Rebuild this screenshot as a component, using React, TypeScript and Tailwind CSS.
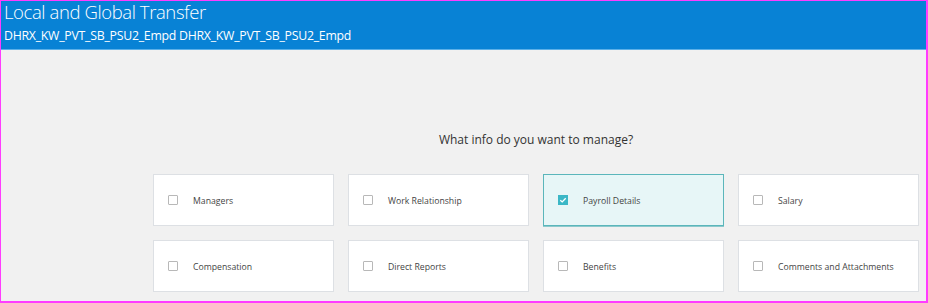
import React from "react";

const items = [
  "Managers",
  "Work Relationship",
  "Payroll Details",
  "Salary",
  "Compensation",
  "Direct Reports",
  "Benefits",
  "Comments and Attachments",
];

function Card({ label, checked }: { label: string; checked: boolean }) {
  return (
    <div
      className={
        checked
          ? "h-[52px] flex items-center border border-[#5bb6bb] bg-[#e7f6f7] shadow-[0_1px_0_#8cc9cc]"
          : "h-[52px] flex items-center border border-[#dde0e4] bg-white"
      }
    >
      {checked ? (
        <div className="ml-[14px] w-[10px] h-[10px] bg-[#3bb7c6] flex items-center justify-center">
          <svg width="8" height="8" viewBox="0 0 8 8">
            <path d="M1.3 4.2 L3.2 5.9 L6.7 2.2" fill="none" stroke="white" strokeWidth="1.3" />
          </svg>
        </div>
      ) : (
        <div className="ml-[14px] w-[10px] h-[10px] border border-[#b8b8b8] bg-white rounded-[1px]" />
      )}
      <span className="ml-[15px] text-[8.7px] text-[#444] leading-none mt-[2px]">{label}</span>
    </div>
  );
}

export default function App() {
  return (
    <div
      className="w-[928px] h-[303px] flex flex-col border-l border-t border-r-2 border-b-2 border-[#ff3cff] overflow-hidden"
      style={{ fontFamily: '"Open Sans", "Noto Sans", sans-serif' }}
    >
      <div className="h-[49px] bg-[#0882d5] px-[3px] flex flex-col border-b border-[#5cb0e8]">
        <div className="text-[18.5px] leading-[22px] text-white font-light tracking-[-0.4px]">Local and Global Transfer</div>
        <div className="text-[12.3px] leading-[16px] text-white mt-[5px] tracking-[-0.25px]">
          DHRX_KW_PVT_SB_PSU2_Empd DHRX_KW_PVT_SB_PSU2_Empd
        </div>
      </div>
      <div className="flex-1 bg-[#f1f1f1] pl-[152px] pt-[82px]">
        <div className="w-[766px]">
          <div className="text-center text-[12px] leading-[16px] text-[#333]">What info do you want to manage?</div>
          <div className="grid grid-cols-4 gap-[14px] mt-[26px]">
            {items.map((it) => (
              <Card key={it} label={it} checked={it === "Payroll Details"} />
            ))}
          </div>
        </div>
      </div>
    </div>
  );
}
